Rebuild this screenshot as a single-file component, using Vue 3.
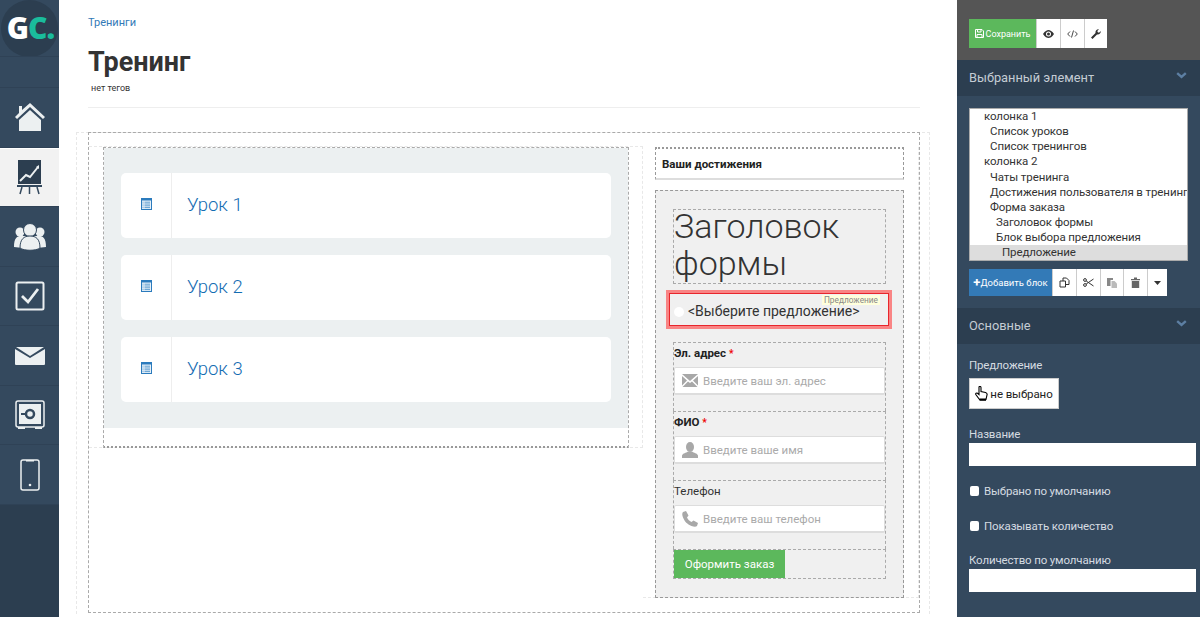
<script setup>
const lessons = ['Урок 1', 'Урок 2', 'Урок 3']
const tree = [
  { t: 'колонка 1', l: 0 },
  { t: 'Список уроков', l: 1 },
  { t: 'Список тренингов', l: 1 },
  { t: 'колонка 2', l: 0 },
  { t: 'Чаты тренинга', l: 1 },
  { t: 'Достижения пользователя в тренинге', l: 1 },
  { t: 'Форма заказа', l: 1 },
  { t: 'Заголовок формы', l: 2 },
  { t: 'Блок выбора предложения', l: 2 },
  { t: 'Предложение', l: 3, sel: true }
]
</script>

<template>
  <div class="app">
    <nav class="rail">
      <div class="logo-cell"><div class="logo">G<span class="teal">C.</span></div></div>
      <div class="rail-empty"></div>
      <div class="rail-item h60">
        <svg width="32" height="32" viewBox="0 0 32 32"><path fill="#ecf0f1" d="M16 1 L31 15 L29 17 L16 5 L3 17 L1 15 L5 11 V4 H8 V8Z"/><path fill="#ecf0f1" d="M16 8 L27 18 V29 H5 V18Z"/></svg>
      </div>
      <div class="rail-item h59 active">
        <svg width="26" height="36" viewBox="0 0 26 36"><rect x="1" y="0" width="23" height="24" fill="#2c3e50"/><path d="M3 21 L9 15 L13 17 L21 7" stroke="#ecf0f1" stroke-width="2" fill="none"/><path d="M19 7 L22 5 L22 9Z" fill="#ecf0f1"/><rect x="0" y="25" width="25" height="2" fill="#34495e"/><path d="M5 27 L3 34 M12.500 27 V34 M20 27 L22 34" stroke="#34495e" stroke-width="1.500"/></svg>
      </div>
      <div class="rail-item h60">
        <svg width="32" height="28" viewBox="0 0 32 28"><circle cx="6" cy="9" r="4.500" fill="#ecf0f1"/><circle cx="26" cy="9" r="4.500" fill="#ecf0f1"/><path fill="#ecf0f1" d="M0 24 C0 15 3 13 7 13 L12 13 L9 25Z M32 24 C32 15 29 13 25 13 L20 13 L23 25Z"/><circle cx="16" cy="7" r="6.500" fill="#ecf0f1" stroke="#34495e"/><path fill="#ecf0f1" stroke="#34495e" d="M6 25 C6 16 10 13 16 13 C22 13 26 16 26 25 C22 28 10 28 6 25Z"/></svg>
      </div>
      <div class="rail-item h59">
        <svg width="30" height="30" viewBox="0 0 30 30"><rect x="1.500" y="1.500" width="27" height="27" rx="1.500" fill="none" stroke="#ecf0f1" stroke-width="2"/><path d="M7 15 L13 21 L23 8" fill="none" stroke="#ecf0f1" stroke-width="2.800"/></svg>
      </div>
      <div class="rail-item h60">
        <svg width="30" height="18" viewBox="0 0 30 18"><path fill="#ecf0f1" d="M1 0 H29 L15 9Z"/><path fill="#ecf0f1" d="M0 2 L15 11 L30 2 V17 Q30 18 29 18 H1 Q0 18 0 17Z"/></svg>
      </div>
      <div class="rail-item h59">
        <svg width="30" height="30" viewBox="0 0 30 30"><rect x="1" y="1" width="28" height="26" rx="2" fill="none" stroke="#ecf0f1" stroke-width="1.500"/><rect x="4" y="4" width="22" height="20" fill="#ecf0f1"/><circle cx="15" cy="14" r="4" fill="none" stroke="#34495e" stroke-width="2.500"/><path d="M6 14 H10" stroke="#34495e" stroke-width="2"/><path d="M3 27 H10 V29 H3Z M20 27 H27 V29 H20Z" fill="#ecf0f1"/></svg>
      </div>
      <div class="rail-item h60">
        <svg width="20" height="32" viewBox="0 0 20 32"><rect x="1" y="1" width="18" height="30" rx="2" fill="none" stroke="#ecf0f1" stroke-width="1.500"/><path d="M6 1 H14 V2.500 H6Z" fill="#ecf0f1"/><circle cx="10" cy="26" r="1.300" fill="#ecf0f1"/></svg>
      </div>
      <div class="rail-rest"></div>
    </nav>

    <main class="main">
      <a class="crumb">Тренинги</a>
      <h1 class="title">Тренинг</h1>
      <div class="tags">нет тегов</div>
      <div class="rule"></div>

      <div class="frame">
        <div class="canvas">
          <div class="wrap-left">
            <section class="col-left">
              <div class="lessons-box">
                <div class="lessons">
                  <div v-for="l in lessons" :key="l" class="lesson">
                    <div class="lesson-icon">
                      <svg width="11" height="12" viewBox="0 0 11 12"><rect x=".5" y=".5" width="10" height="11" fill="#e6f0f8" stroke="#2b7bbd"/><rect width="11" height="2.500" fill="#2b7bbd"/><path d="M3.500 4.200 H9 M3.500 6 H9 M3.500 7.800 H9 M3.500 9.600 H9" stroke="#3f8ac6" stroke-width=".8"/><path d="M1.500 4.200 H2.500 M1.500 6 H2.500 M1.500 7.800 H2.500 M1.500 9.600 H2.500" stroke="#3f8ac6" stroke-width=".8"/></svg>
                    </div>
                    <div class="lesson-name">{{ l }}</div>
                  </div>
                </div>
              </div>
            </section>
          </div>

          <div class="wrap-right">
            <section class="col-right">
              <div class="achv">Ваши достижения</div>
              <div class="form">
                <div class="form-title"><div class="form-title-text">Заголовок формы</div></div>
                <div class="offer">
                  <span class="radio"></span>
                  <span class="offer-text">&lt;Выберите предложение&gt;</span>
                  <div class="hl"></div>
                  <div class="hl-tip">Предложение</div>
                </div>
                <div class="group">
                  <div class="lbl strong">Эл. адрес <span class="req">*</span></div>
                  <div class="field">
                    <svg width="16" height="13" viewBox="0 0 16 13"><path fill="#a8a8a8" d="M0 0 H16 L8 7Z M0 2 L5 6.500 L0 11.500Z M16 2 L11 6.500 L16 11.500Z M6 7.500 L8 9 L10 7.500 L15.500 13 H0.500Z"/></svg>
                    <span>Введите ваш эл. адрес</span>
                  </div>
                </div>
                <div class="group">
                  <div class="lbl strong">ФИО <span class="req">*</span></div>
                  <div class="field">
                    <svg width="16" height="16" viewBox="0 0 16 16"><ellipse cx="8" cy="5" rx="4" ry="5" fill="#a8a8a8"/><path fill="#a8a8a8" d="M0 16 V13.500 C1 11 4 11 6 9.500 H10 C12 11 15 11 16 13.500 V16Z"/></svg>
                    <span>Введите ваше имя</span>
                  </div>
                </div>
                <div class="group">
                  <div class="lbl">Телефон</div>
                  <div class="field">
                    <svg width="16" height="16" viewBox="0 0 16 16"><path fill="#a8a8a8" d="M1 1 L4 0 L6.500 4.500 L5 6.500 C5.500 8 8 10.500 9.500 11 L11.500 9.500 L16 12 L15 15 C14 16 12 16 9.500 15 C5 13 3 11 1 6.500 C0 4 0 2 1 1Z"/></svg>
                    <span>Введите ваш телефон</span>
                  </div>
                </div>
                <div class="submit-row"><button class="submit">Оформить заказ</button></div>
              </div>
            </section>
          </div>
        </div>
      </div>
    </main>

    <aside class="panel">
      <div class="topbar">
        <div class="btn-group">
          <button class="btn green">
            <svg width="9" height="9" viewBox="0 0 9 9"><path fill="none" stroke="#fff" d="M.5.5 H7 L8.500 2 V8.500 H.5Z M2.500.5 V3 H6 V.5 M2 8.500 V5.500 H7 V8.500"/></svg>
            Сохранить
          </button>
          <button class="btn ico w24"><svg width="11" height="8" viewBox="0 0 11 8"><path fill="#333" fill-rule="evenodd" d="M0 4 C2 1 4 0 5.500 0 C7 0 9 1 11 4 C9 7 7 8 5.500 8 C4 8 2 7 0 4Z M5.500 1.500 A2.500 2.500 0 1 0 5.500 6.500 A2.500 2.500 0 1 0 5.500 1.500Z"/><circle cx="5.500" cy="4" r="1.500" fill="#333"/></svg></button>
          <button class="btn ico w24"><svg width="11" height="8" viewBox="0 0 11 8"><path fill="none" stroke="#333" stroke-width=".9" d="M3 1.500 L.7 4 L3 6.500 M8 1.500 L10.300 4 L8 6.500 M6.500 .5 L4.500 7.500"/></svg></button>
          <button class="btn ico w23"><svg width="10" height="10" viewBox="0 0 10 10"><path fill="#333" d="M0 8.500 L4.500 4 C4 2 5.500 0 8 .2 L6.300 2 L6.800 3.300 L8 3.800 L9.800 2 C10 4.500 8 6 6 5.500 L1.500 10Z"/></svg></button>
        </div>
      </div>

      <header class="p-head">
        <span>Выбранный элемент</span>
        <svg width="11" height="7" viewBox="0 0 11 7"><path d="M1.200 1.200 L5.500 5 L9.800 1.200" fill="none" stroke="#5d7fa3" stroke-width="2.400"/></svg>
      </header>
      <div class="p-body sel-body">
        <div class="tree">
          <div v-for="n in tree" :key="n.t" class="node" :class="['lvl' + n.l, { sel: n.sel }]">{{ n.t }}</div>
        </div>
        <div class="btn-group tools">
          <button class="btn blue"><b class="plus">+</b>Добавить блок</button>
          <button class="btn ico w24"><svg width="11" height="11" viewBox="0 0 11 11"><path fill="none" stroke="#333" d="M1 4 H6.500 V10 H1Z M4 4 V1 H7.500 L10 3.500 V7.500 H6.500"/></svg></button>
          <button class="btn ico w24"><svg width="11" height="9" viewBox="0 0 11 9"><circle cx="2" cy="2" r="1.400" fill="none" stroke="#333"/><circle cx="2" cy="7" r="1.400" fill="none" stroke="#333"/><path d="M3.200 3 L10.500 8 M3.200 6 L10.500 1" stroke="#333"/></svg></button>
          <button class="btn ico w23"><svg width="10" height="11" viewBox="0 0 10 11"><path fill="#888" d="M0 1 H6 V3 H3.500 V9 H0Z"/><path fill="#bbb" d="M4.500 4 H7.500 L10 6.500 V11 H4.500Z"/></svg></button>
          <button class="btn ico w24"><svg width="9" height="11" viewBox="0 0 9 11"><path fill="#666" d="M0 2 H3 V.5 H6 V2 H9 V3.200 H0Z M.8 4 H8.200 V11 H.8Z"/></svg></button>
          <button class="btn ico w20"><svg width="7" height="4" viewBox="0 0 7 4"><path fill="#333" d="M0 0 H7 L3.500 4Z"/></svg></button>
        </div>
      </div>

      <header class="p-head second">
        <span>Основные</span>
        <svg width="11" height="7" viewBox="0 0 11 7"><path d="M1.200 1.200 L5.500 5 L9.800 1.200" fill="none" stroke="#5d7fa3" stroke-width="2.400"/></svg>
      </header>
      <div class="p-body props">
        <label class="p-lbl first">Предложение</label>
        <button class="pick">
          <svg width="13" height="15" viewBox="0 0 13 15"><path fill="#fff" stroke="#000" stroke-width="1.100" d="M4 .8 C4.800 0 6 .5 6 1.500 V5.500 L10.500 6.500 C12 7 12.300 8 12 9 L11 13.500 H4.500 L.8 8.500 C.3 7.500 1.500 6.500 2.500 7.300 L4 8.500Z"/><rect x="4.500" y="12.500" width="6.500" height="2.300" fill="#000"/></svg>
          не выбрано
        </button>
        <label class="p-lbl name">Название</label>
        <div class="p-input"></div>
        <label class="check c1"><span class="cb"></span>Выбрано по умолчанию</label>
        <label class="check c2"><span class="cb"></span>Показывать количество</label>
        <label class="p-lbl qty">Количество по умолчанию</label>
        <div class="p-input"></div>
      </div>
    </aside>
  </div>
</template>

<style>
html, body { margin: 0; padding: 0; background: #fff; overflow: hidden; }
</style>

<style scoped>
* { box-sizing: border-box; }
.app {
  display: flex;
  width: 1200px;
  height: 617px;
  overflow: hidden;
  font-family: Roboto, "Open Sans", "Liberation Sans", sans-serif;
  color: #333;
}
.rail { width: 59px; flex: none; display: flex; flex-direction: column; background: #34495e; }
.logo-cell { height: 57px; flex: none; overflow: hidden; border-bottom: 1px solid #2f4256; padding-left: 1px; }
.logo {
  width: 57px; height: 57px; border-radius: 50%; background: #2c3e50; padding-left: 2px;
  color: #fff; font: 800 30px/56px "Open Sans", sans-serif; text-align: center; letter-spacing: -1px;
}
.teal { color: #1abc9c; }
.rail-empty { height: 31px; flex: none; border-bottom: 1px solid #2f4256; }
.rail-item { display: flex; align-items: center; justify-content: center; flex: none; border-bottom: 1px solid #2f4256; }
.h60 { height: 60px; }
.h59 { height: 59px; }
.active { background: #f2f2f2; border-bottom: 1px solid #2f4256; border-top: 1px solid #fff; }
.rail-rest { flex: 1; background: #2c3e50; }

.main { width: 898px; flex: none; padding: 15px 0 0 29px; background: #fff; }
.crumb { display: block; font-size: 11px; line-height: 15px; color: #337ab7; }
.title { margin: 17px 0 0; font-size: 27px; line-height: 30px; font-weight: 700; color: #333; }
.tags { margin: 5px 0 0 3px; font-size: 9px; line-height: 12px; color: #333; }
.rule { width: 832px; height: 1px; margin-top: 13px; background: #eee; }

.frame {
  width: 854px; height: 482px; margin: 24px 0 0 -12px; padding-left: 11px;
  border: 1px dashed #e8e8e8; border-bottom: 0;
}
.canvas {
  width: 832px; height: 481px; display: flex; align-items: flex-start;
  border: 1px dashed #aaa; padding-top: 14px; margin-top: -1px;
}
.wrap-left { width: 554px; height: 302px; flex: none; padding-left: 14px; border: 1px dashed #e8e8e8; border-left: 0; border-bottom: 1px dashed #e8e8e8; margin-top: -1px; }
.wrap-right { width: 276px; height: 451px; flex: none; padding-left: 12px; border-bottom: 1px dashed #e8e8e8; border-right: 1px dashed #e8e8e8; }
.col-left { width: 526px; height: 301px; border: 1px dashed #aaa; border-bottom: 2px dotted #999; padding-bottom: 18px; }
.lessons-box { height: 280px; background: #ecf0f1; padding: 25px 17px 0 17px; }
.lessons { display: flex; flex-direction: column; gap: 17px; }
.lesson { display: flex; height: 65px; background: #fff; border-radius: 5px; }
.lesson-icon { width: 51px; flex: none; display: flex; justify-content: center; padding-top: 25px; border-right: 1px solid #eee; }
.lesson-name { padding: 20px 0 0 15px; font-size: 18.500px; line-height: 25px; color: #136cb2; font-weight: 300; }

.col-right { width: 249px; }
.achv {
  height: 33px; padding: 7px 6px; font-size: 11.500px; line-height: 16px; font-weight: 700; color: #222;
  border: 1px dashed #999; border-top: 2px dotted #999; border-bottom: 2px solid #ddd;
}
.form {
  height: 408px; margin-top: 10px; padding: 18px 17px 0; background: #f0f0f0;
  border: 1px dashed #999;
}
.form-title { height: 75px; border: 1px dashed #aaa; overflow: visible; }
.form-title-text { margin-top: -2px; font-size: 34px; line-height: 37px; font-weight: 300; color: #333; }
.offer {
  position: relative; height: 33px; margin-top: 9px; display: flex; align-items: center; padding: 2px 0 0 1px; gap: 4px;
}
.radio { width: 10px; height: 10px; border-radius: 50%; background: #fff; flex: none; margin-top: 3px; }
.offer-text { font-size: 14px; line-height: 18px; color: #333; }
.hl { position: absolute; left: -4px; right: -3px; top: 0; bottom: 0; border: 1px solid #e8262c; box-shadow: 0 0 0 3px rgba(255, 60, 60, .6); }
.hl-tip { position: absolute; right: 6px; top: 2px; height: 10px; padding: 0 2px; background: #ffffdc; font-size: 8.300px; line-height: 10px; color: #888; }
.group { height: 69px; border: 1px dashed #aaa; border-bottom: 0; padding-top: 3px; }
.offer + .group { margin-top: 16px; }
.lbl { font-size: 11.500px; line-height: 15px; color: #333; }
.lbl.strong { font-weight: 700; color: #222; }
.req { color: #e00; font-size: 10px; }
.field {
  height: 28px; margin: 6px 0 0 0; width: 211px; display: flex; align-items: center; gap: 5px; padding-left: 7px;
  background: #fff; border: 1px solid #ddd; border-width: 1px 1px 2px; border-radius: 2px; font-size: 11.500px; color: #aaa;
}
.submit-row { height: 30px; border: 1px dashed #aaa; }
.submit { height: 28px; width: 111px; border: 0; padding: 0; background: #5cb85c; color: #fff; font: inherit; font-size: 11.500px; display: block; }

.panel { flex: none; width: 243px; background: #34495e; display: flex; flex-direction: column; }
.topbar { height: 60px; flex: none; background: #555; padding: 19px 0 0 12px; }
.btn-group { display: flex; height: 29px; }
.btn { border: 0; padding: 0; font: inherit; display: flex; align-items: center; justify-content: center; height: 100%; }
.green { width: 67px; background: #5cb85c; color: #fff; font-size: 9px; gap: 2px; }
.ico { background: #fff; border-left: 1px solid #ccc; }
.w24 { width: 24px; }
.w23 { width: 23px; }
.w20 { width: 20px; }
.p-head {
  height: 36px; flex: none; display: flex; align-items: center; justify-content: space-between;
  padding: 0 13px 0 12px; background: #2c3e50; color: #c4ccd4; font-size: 12.800px; padding-bottom: 1px;
}
.p-head svg { margin-top: -4px; }
.p-body { padding: 0 4px 0 12px; }
.sel-body { height: 212px; padding-top: 12px; }
.tree { width: 219px; height: 153px; background: #fff; border: 1px solid #aaa; overflow: hidden; }
.node { height: 15.150px; font-size: 11.500px; letter-spacing: -.1px; line-height: 15px; white-space: nowrap; color: #333; }
.lvl0 { padding-left: 14px; }
.lvl1 { padding-left: 20px; }
.lvl2 { padding-left: 26px; }
.lvl3 { padding-left: 32px; }
.sel { background: #ddd; }
.tools { height: 27px; margin-top: 8px; }
.blue { width: 83px; background: #337ab7; color: #fff; font-size: 9.500px; }
.plus { font-size: 13px; line-height: 1; }
.props { flex: 1; }
.p-lbl { display: block; font-size: 11.500px; letter-spacing: -.15px; line-height: 14px; color: #d5dbe1; }
.first { margin-top: 14px; }
.pick {
  display: flex; align-items: center; justify-content: center; gap: 2px; width: 90px; height: 31px; margin-top: 6px;
  background: #fff; border: 1px solid #ccc; padding: 0; font: inherit; font-size: 11.500px; letter-spacing: -.1px; color: #222;
}
.name { margin-top: 18px; }
.p-input { width: 227px; height: 23px; margin-top: 2px; background: #fff; }
.check { display: flex; align-items: center; gap: 5px; font-size: 11.500px; letter-spacing: -.15px; line-height: 14px; color: #d5dbe1; }
.c1 { margin-top: 18px; padding-left: 1px; }
.c2 { margin-top: 21px; padding-left: 1px; }
.cb { width: 9px; height: 10px; background: #fff; border-radius: 2px; flex: none; }
.qty { margin-top: 20px; }
</style>
